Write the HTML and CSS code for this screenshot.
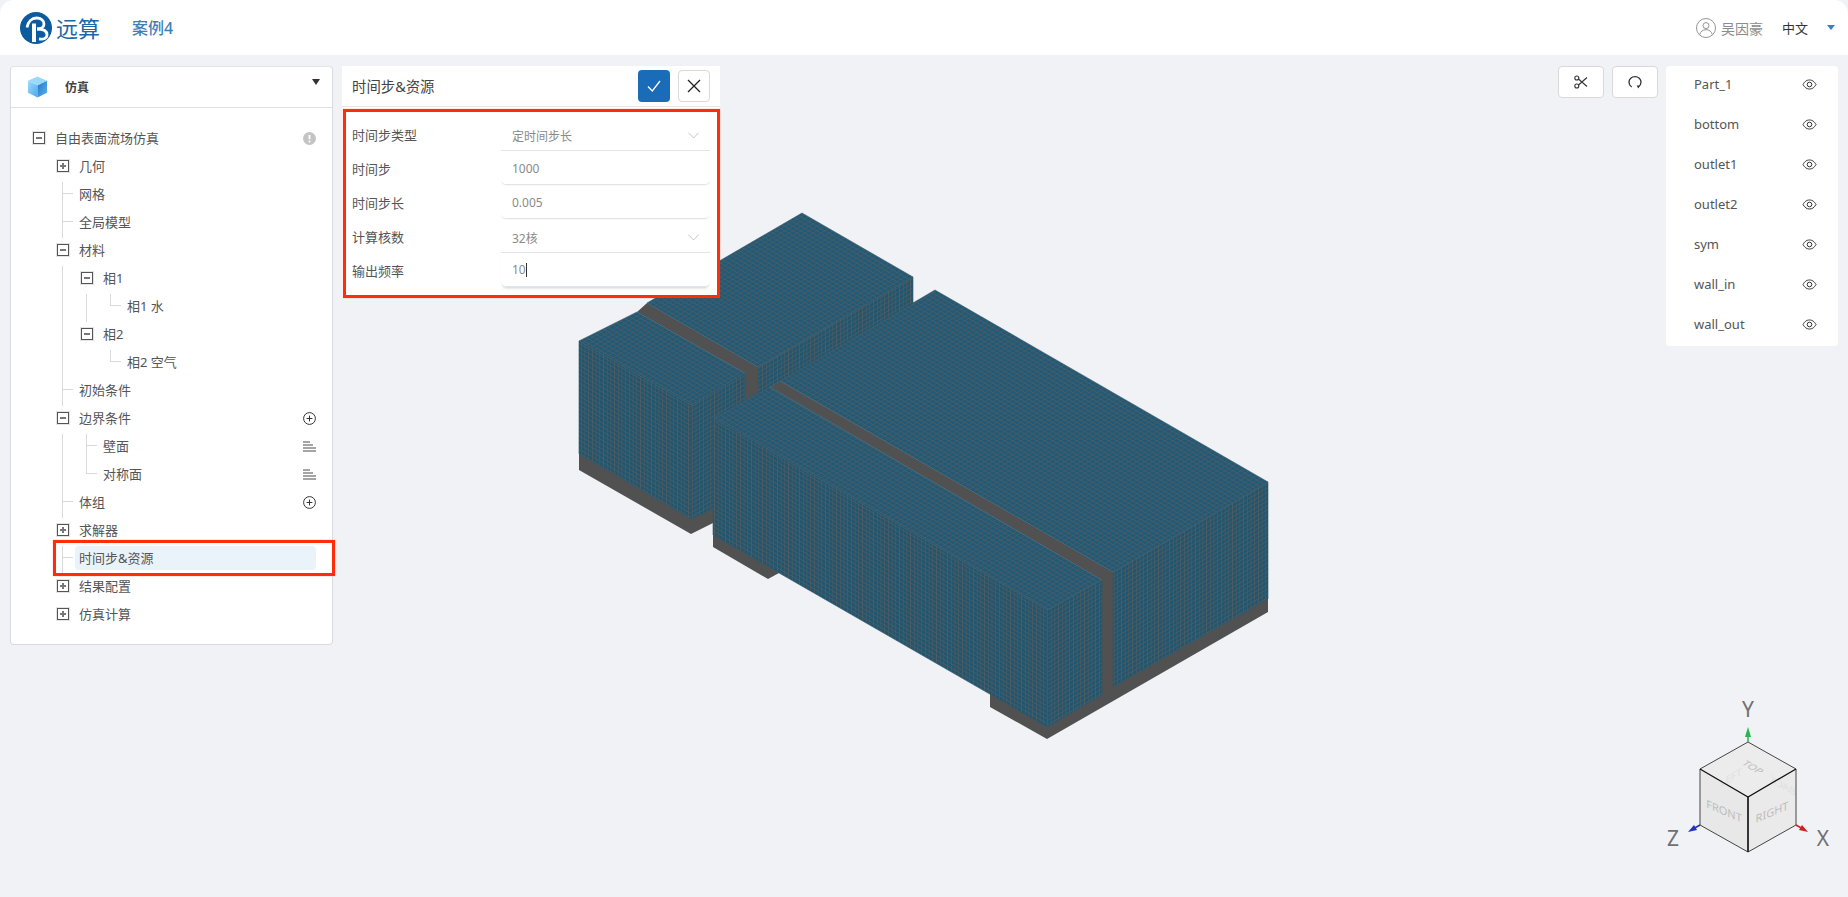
FILE: index.html
```html
<!DOCTYPE html>
<html lang="zh">
<head>
<meta charset="utf-8">
<title>远算</title>
<link rel="stylesheet" href="styles.css">
</head>
<body>
<svg class="defs" width="0" height="0" aria-hidden="true">
  <defs>
    <symbol id="i-plusc" viewBox="0 0 13 13"><circle cx="6.5" cy="6.5" r="5.9" fill="none" stroke="#333" stroke-width="1"/><path d="M6.5 3.6v5.8M3.6 6.5h5.8" stroke="#333" stroke-width="1"/></symbol>
    <symbol id="i-lines" viewBox="0 0 13 11"><path d="M0 1h7M0 4h10M0 7h13M0 10h13" stroke="#888" stroke-width="1.3"/></symbol>
    <symbol id="i-eye" viewBox="0 0 15 11"><path d="M1 5.5C3 2 5 1 7.500 1s4.500 1 6.500 4.500C12 9 10 10 7.500 10S3 9 1 5.500z" fill="none" stroke="#333" stroke-width="1"/><circle cx="7.500" cy="5.500" r="2.300" fill="none" stroke="#333" stroke-width="1"/></symbol>
    <symbol id="i-chev" viewBox="0 0 11 7"><path d="M.5 .8 5.500 6l5-5.200" fill="none" stroke="#c4c4c4" stroke-width="1"/></symbol>
    <pattern id="m-top" patternUnits="userSpaceOnUse" width="4" height="4" patternTransform="matrix(1 .577 1 -.577 0 0)"><rect width="4" height="4" fill="#215a76"/><path d="M0 0H4M0 0V4" stroke="#575c5f" stroke-width="1" fill="none"/></pattern>
    <pattern id="m-left" patternUnits="userSpaceOnUse" width="3.700" height="4.400" patternTransform="matrix(1 .577 0 1 0 0)"><rect width="3.700" height="4.400" fill="#22566f"/><path d="M0 0H3.700M0 0V4.400" stroke="#575c5f" stroke-width="1.150" fill="none"/></pattern>
    <pattern id="m-right" patternUnits="userSpaceOnUse" width="3.700" height="4.400" patternTransform="matrix(1 -.577 0 1 0 0)"><rect width="3.700" height="4.400" fill="#22566f"/><path d="M0 0H3.700M0 0V4.400" stroke="#575c5f" stroke-width="1.150" fill="none"/></pattern>
    <linearGradient id="cube-a" x1="0" y1="0" x2="1" y2="1"><stop offset="0" stop-color="#9bdafa"/><stop offset="1" stop-color="#4ea8ec"/></linearGradient>
    <linearGradient id="cube-b" x1="0" y1="0" x2="1" y2="1"><stop offset="0" stop-color="#1f75c8"/><stop offset="1" stop-color="#5fb2ee"/></linearGradient>
  </defs>
</svg>

<svg class="scene" viewBox="0 0 1848 897" aria-hidden="true">
  <g fill="#515151">
    <polygon points="579,450 579,470 691,534 713,523 713,500"/>
    <polygon points="713,530 713,547 768,579 790,567"/>
    <polygon points="990,680 990,707 1047,739 1268,612 1268,590 1047,700"/>
    <polygon points="637,312 647,303 758,367 758,400 745,405 745,373"/>
    <polygon points="770,387 780,381 1113,572 1113,690 1102,696 1102,580"/>
  </g>
  <g class="mesh">
    <polygon points="647,303 802,213 913,277 758,367" fill="url(#m-top)"/>
    <polygon points="758,367 913,277 913,304 770,387 758,394" fill="url(#m-right)"/>
    <polygon points="579,341 637,312 745,373 691,405" fill="url(#m-top)"/>
    <polygon points="579,341 691,405 691,519 579,454" fill="url(#m-left)"/>
    <polygon points="691,405 745,373 745,402 713,418 713,509 691,519" fill="url(#m-right)"/>
    <polygon points="780,381 935,290 1268,482 1113,572" fill="url(#m-top)"/>
    <polygon points="1113,572 1268,482 1268,599 1113,687" fill="url(#m-right)"/>
    <polygon points="713,418 767,388 770,387 1102,580 1047,610" fill="url(#m-top)"/>
    <polygon points="713,418 1047,610 1047,727 713,535" fill="url(#m-left)"/>
    <polygon points="1047,610 1102,580 1102,695 1047,727" fill="url(#m-right)"/>
  </g>

  <g class="gizmo">
    <polygon points="1748,742 1796,769 1748,797 1700,769" fill="#ececec"/>
    <polygon points="1700,769 1748,797 1748,852 1700,825" fill="#e8e8e8"/>
    <polygon points="1748,797 1796,769 1796,825 1748,852" fill="#eaeaea"/>
    <text class="gz-faint" transform="matrix(1 -.577 0 1 1731 781)">LEFT</text>
    <text class="gz-faint" transform="matrix(-1 -.577 0 1 1783 789)">BACK</text>
    <text class="gz-label" transform="matrix(.85 .5 -.75 .45 1750 769)">TOP</text>
    <text class="gz-label" transform="matrix(1 .42 0 1 1724 815)">FRONT</text>
    <text class="gz-label" transform="matrix(1 -.42 0 1 1772 816)">RIGHT</text>
    <path d="M1748 742 1796 769 1796 825 1748 852 1700 825 1700 769Z" fill="none" stroke="#444" stroke-width="1"/>
    <path d="M1700 769 1748 797 1796 769" fill="none" stroke="#111" stroke-width="1.300"/>
    <path d="M1748 797V852" stroke="#222" stroke-width="1.800"/>
    <path d="M1748 742V732" stroke="#25b84a" stroke-width="1.500"/>
    <polygon points="1748,727 1751,737 1745,737" fill="#25b84a"/>
    <path d="M1700 825 1693 829" stroke="#2233bb" stroke-width="1.500"/>
    <polygon points="1688,832 1694,825 1697,830" fill="#2233bb"/>
    <path d="M1796 825 1803 829" stroke="#cc2222" stroke-width="1.500"/>
    <polygon points="1808,832 1802,825 1799,830" fill="#cc2222"/>
    <text class="gz-axis" x="1748" y="717">Y</text>
    <text class="gz-axis" x="1673" y="846">Z</text>
    <text class="gz-axis" x="1823" y="846">X</text>
  </g>
</svg>

<header class="topbar">
  <div class="brand">
    <svg class="logo" viewBox="0 0 32 32" aria-hidden="true">
      <circle cx="16" cy="16" r="16" fill="#0c5aa0"/>
      <g fill="none" stroke="#fff">
        <path d="M7 15.500C8 9.500 12 6 16.500 6 21 6 24 8.800 24 12c0 3.200-3 5-7 5" stroke-width="2.800"/>
        <path d="M14 11.500V30" stroke-width="4"/>
        <path d="M17 17c5.500 0 10 1.800 10 5.800 0 3.400-3.500 5-8 4" stroke-width="2.800"/>
      </g>
    </svg>
    <span class="brand-name">远算</span>
  </div>
  <span class="case-name">案例4</span>
  <div class="top-right">
    <svg class="user-ico" viewBox="0 0 20 20" aria-hidden="true"><circle cx="10" cy="10" r="9.500" fill="none" stroke="#888" stroke-width=".9"/><circle cx="10" cy="7.600" r="3" fill="none" stroke="#888" stroke-width=".9"/><path d="M3.800 16.500c.6-3 3-4.800 6.200-4.800s5.600 1.800 6.200 4.800" fill="none" stroke="#888" stroke-width=".9"/></svg>
    <span class="user-name">吴因豪</span>
    <span class="lang">中文</span>
    <span class="lang-caret"></span>
  </div>
</header>

<main class="workspace">
  <aside class="sidebar">
    <div class="side-head">
      <svg class="side-cube" viewBox="0 0 22 22" aria-hidden="true">
        <polygon points="11,0 21,4.500 11,9.500 1,4.500" fill="#9bd9f8"/>
        <polygon points="1,4.500 11,9.500 11,22 1,17" fill="url(#cube-a)"/>
        <polygon points="11,9.500 21,4.500 21,17 11,22" fill="url(#cube-b)"/>
      </svg>
      <span class="side-title">仿真</span>
      <span class="side-caret"></span>
    </div>
    <div class="tree">
      <div class="row"><span class="sw"><i class="box minus"></i></span><span class="lbl">自由表面流场仿真</span>
        <svg class="act" viewBox="0 0 13 13" aria-hidden="true"><circle cx="6.500" cy="6.500" r="6.500" fill="#c4c4c4"/><path d="M6.500 3v4.300" stroke="#fff" stroke-width="1.800"/><circle cx="6.500" cy="9.500" r="1" fill="#fff"/></svg>
      </div>
      <div class="row"><span class="ind"></span><span class="sw"><i class="box plus"></i></span><span class="lbl">几何</span></div>
      <div class="row"><span class="ind"></span><span class="sw leaf"></span><span class="lbl">网格</span></div>
      <div class="row"><span class="ind"></span><span class="sw leaf"></span><span class="lbl">全局模型</span></div>
      <div class="row"><span class="ind"></span><span class="sw"><i class="box minus"></i></span><span class="lbl">材料</span></div>
      <div class="row"><span class="ind"></span><span class="ind vline"></span><span class="sw"><i class="box minus"></i></span><span class="lbl">相1</span></div>
      <div class="row"><span class="ind"></span><span class="ind vline"></span><span class="ind vline"></span><span class="sw last"></span><span class="lbl">相1 水</span></div>
      <div class="row"><span class="ind"></span><span class="ind vline"></span><span class="sw"><i class="box minus"></i></span><span class="lbl">相2</span></div>
      <div class="row"><span class="ind"></span><span class="ind vline"></span><span class="ind"></span><span class="sw last"></span><span class="lbl">相2 空气</span></div>
      <div class="row"><span class="ind"></span><span class="sw leaf"></span><span class="lbl">初始条件</span></div>
      <div class="row"><span class="ind"></span><span class="sw"><i class="box minus"></i></span><span class="lbl">边界条件</span><svg class="act" aria-hidden="true"><use href="#i-plusc"/></svg></div>
      <div class="row"><span class="ind"></span><span class="ind vline"></span><span class="sw leaf"></span><span class="lbl">壁面</span><svg class="act act-lines" aria-hidden="true"><use href="#i-lines"/></svg></div>
      <div class="row"><span class="ind"></span><span class="ind vline"></span><span class="sw last"></span><span class="lbl">对称面</span><svg class="act act-lines" aria-hidden="true"><use href="#i-lines"/></svg></div>
      <div class="row"><span class="ind"></span><span class="sw leaf"></span><span class="lbl">体组</span><svg class="act" aria-hidden="true"><use href="#i-plusc"/></svg></div>
      <div class="row"><span class="ind"></span><span class="sw"><i class="box plus"></i></span><span class="lbl">求解器</span></div>
      <div class="row"><span class="ind"></span><span class="sw leaf"></span><span class="lbl selected">时间步&amp;资源</span><span class="mark mark-row"></span></div>
      <div class="row"><span class="ind"></span><span class="sw"><i class="box plus"></i></span><span class="lbl">结果配置</span></div>
      <div class="row"><span class="ind"></span><span class="sw"><i class="box plus"></i></span><span class="lbl">仿真计算</span></div>
    </div>
  </aside>

  <section class="panel">
    <div class="panel-head">
      <span class="panel-title">时间步&amp;资源</span>
      <button class="btn-ok" type="button" aria-label="确定"><svg viewBox="0 0 16 16" aria-hidden="true"><path d="M2 8.500 6.300 13 14 3" fill="none" stroke="#fff" stroke-width="1.300"/></svg></button>
      <button class="btn-close" type="button" aria-label="关闭"><svg viewBox="0 0 14 14" aria-hidden="true"><path d="M1 1l12 12M13 1 1 13" fill="none" stroke="#222" stroke-width="1.300"/></svg></button>
    </div>
    <div class="form">
      <div class="f-row"><span class="f-label">时间步类型</span><div class="f-ctl select"><span>定时间步长</span><svg class="chev" aria-hidden="true"><use href="#i-chev"/></svg></div></div>
      <div class="f-row"><span class="f-label">时间步</span><div class="f-ctl input"><span>1000</span></div></div>
      <div class="f-row"><span class="f-label">时间步长</span><div class="f-ctl input"><span>0.005</span></div></div>
      <div class="f-row"><span class="f-label">计算核数</span><div class="f-ctl select"><span>32核</span><svg class="chev" aria-hidden="true"><use href="#i-chev"/></svg></div></div>
      <div class="f-row"><span class="f-label">输出频率</span><div class="f-ctl input active"><span class="caret-txt">10</span></div></div>
    </div>
    <span class="mark mark-form"></span>
  </section>

  <div class="spacer"></div>

  <div class="tools">
    <button class="tool" type="button" aria-label="剪切"><svg viewBox="0 0 14 14" aria-hidden="true"><circle cx="2.800" cy="3" r="2" fill="none" stroke="#333" stroke-width="1.100"/><circle cx="2.800" cy="11" r="2" fill="none" stroke="#333" stroke-width="1.100"/><path d="M4.500 4 13 11.500M4.500 10 13 2.500" fill="none" stroke="#333" stroke-width="1.100"/></svg></button>
    <button class="tool" type="button" aria-label="重置"><svg viewBox="0 0 14 14" aria-hidden="true"><path d="M3.700 12C1.800 10.800 1 9.200 1 7.300 1 4 3.600 1.600 7 1.600s6 2.400 6 5.700c0 1.900-.8 3.500-2.700 4.700" fill="none" stroke="#333" stroke-width="1.300"/><polygon points="8.600,10.400 12,10.400 10.300,13.400" fill="#333"/></svg></button>
  </div>

  <ul class="parts">
    <li class="part"><span>Part_1</span><svg class="eye" aria-hidden="true"><use href="#i-eye"/></svg></li>
    <li class="part"><span>bottom</span><svg class="eye" aria-hidden="true"><use href="#i-eye"/></svg></li>
    <li class="part"><span>outlet1</span><svg class="eye" aria-hidden="true"><use href="#i-eye"/></svg></li>
    <li class="part"><span>outlet2</span><svg class="eye" aria-hidden="true"><use href="#i-eye"/></svg></li>
    <li class="part"><span>sym</span><svg class="eye" aria-hidden="true"><use href="#i-eye"/></svg></li>
    <li class="part"><span>wall_in</span><svg class="eye" aria-hidden="true"><use href="#i-eye"/></svg></li>
    <li class="part"><span>wall_out</span><svg class="eye" aria-hidden="true"><use href="#i-eye"/></svg></li>
  </ul>
</main>
</body>
</html>
```
FILE: styles.css
```css
* { box-sizing: border-box; }
html, body { height: 100%; }
body {
  margin: 0;
  height: 897px;
  overflow: hidden;
  position: relative;
  background: #f0f2f6;
  color: #555;
  font-family: "Noto Sans", "Noto Sans CJK SC", sans-serif;
  font-size: 13px;
}
button { font: inherit; padding: 0; cursor: pointer; }
.defs { position: absolute; }
.scene { position: absolute; left: 0; top: 0; width: 1848px; height: 897px; }
.mesh polygon { stroke: #30586c; stroke-width: .6; }

.gz-label { font-size: 11px; fill: #bdbdbd; text-anchor: middle; font-family: "Noto Sans", sans-serif; }
.gz-faint { font-size: 10px; fill: #e0e0e0; text-anchor: middle; font-family: "Noto Sans", sans-serif; }
.gz-axis { font-size: 21px; fill: #707070; text-anchor: middle; font-family: "Noto Sans", sans-serif; }

.topbar {
  position: relative;
  height: 55px;
  display: flex;
  align-items: center;
  padding-left: 20px;
  background: #fff;
  border-radius: 14px 14px 0 0;
}
.brand { display: flex; align-items: center; }
.logo { width: 32px; height: 32px; }
.brand-name { margin-left: 4px; font-size: 22px; line-height: 30px; color: #1c66a8; }
.case-name { margin-left: 32px; margin-top: -2px; font-size: 16px; font-weight: 500; color: #3f7fb8; }
.top-right { margin-left: auto; display: flex; align-items: center; padding-right: 13px; }
.user-ico { width: 20px; height: 20px; }
.user-name { margin-left: 5px; font-size: 14px; color: #8c8c8c; }
.lang { margin-left: 19px; font-size: 13px; color: #333; margin-top: -1px; }
.lang-caret {
  margin-left: 19px;
  width: 0; height: 0;
  border-left: 4px solid transparent;
  border-right: 4px solid transparent;
  border-top: 5px solid #3a7bd5;
}

.workspace {
  position: relative;
  display: flex;
  align-items: flex-start;
  padding: 11px 10px 0 10px;
}

.sidebar {
  width: 323px;
  background: #fff;
  border: 1px solid #d8dbe0;
  border-top-color: #e2e4e8;
  border-radius: 4px;
}
.side-head {
  position: relative;
  height: 41px;
  display: flex;
  align-items: center;
  padding-left: 16px;
  border-bottom: 1px solid #dcdfe4;
}
.side-cube { width: 21px; height: 22px; }
.side-title { margin-left: 17px; font-size: 12px; font-weight: 700; color: #444; }
.side-caret {
  position: absolute; right: 12px; top: 12px;
  width: 0; height: 0;
  border-left: 4px solid transparent;
  border-right: 4px solid transparent;
  border-top: 6px solid #333;
}

.tree { padding: 16px; }
.row { position: relative; display: flex; align-items: center; height: 28px; }
.ind, .sw { position: relative; flex: none; width: 24px; height: 28px; display: flex; align-items: center; justify-content: center; }
.vline::before, .leaf::before, .last::before {
  content: ""; position: absolute; left: 11px; top: 2px; bottom: -2px; width: 1px; background: #d9d9d9;
}
.last::before { bottom: 14px; }
.leaf::after, .last::after {
  content: ""; position: absolute; left: 11px; top: 13px; width: 11px; height: 1px; background: #d9d9d9;
}
.box {
  position: relative;
  display: block;
  width: 12px; height: 12px;
  border: 1px solid #555;
  background: #fff;
  box-shadow: 0 0 0 1px #e4e4e4;
}
.box::before { content: ""; position: absolute; left: 2px; top: 4px; width: 6px; height: 2px; background: #777; }
.plus::after { content: ""; position: absolute; left: 4px; top: 2px; width: 2px; height: 6px; background: #777; }
.lbl { padding: 0 4px; height: 24px; line-height: 24px; color: #555; white-space: nowrap; }
.selected { flex: 1; background: #ebf3fa; border-radius: 4px; }
.act { margin-left: auto; flex: none; width: 13px; height: 13px; }
.act-lines { height: 11px; }

.mark {
  position: absolute;
  border: 3px solid #ff2d0a;
  box-shadow: 0 0 1px rgba(255, 45, 10, .5);
  pointer-events: none;
}
.mark-row { left: 26px; right: -19px; top: -4px; bottom: -4px; }
.mark-form { left: 1px; right: 0; top: 43px; bottom: 0; }

.panel {
  position: relative;
  margin-left: 9px;
  width: 378px;
  height: 232px;
  background: #fff;
}
.panel-head {
  height: 41px;
  display: flex;
  align-items: center;
  padding: 0 10px;
  gap: 8px;
  border-bottom: 1px solid #e8e8e8;
}
.panel-title { flex: 1; font-size: 14.4px; color: #444; margin-top: -2px; }
.btn-ok, .btn-close { width: 32px; height: 32px; display: flex; align-items: center; justify-content: center; border-radius: 4px; margin-top: -1px; }
.btn-ok { background: #1a6cb8; border: 0; }
.btn-ok svg { width: 16px; height: 16px; }
.btn-close { background: #fff; border: 1px solid #d9d9d9; }
.btn-close svg { width: 14px; height: 14px; }

.form { padding: 10px 10px 0; }
.f-row { display: flex; align-items: center; height: 34px; }
.f-label { width: 149px; flex: none; color: #555; font-size: 13px; padding-top: 1px; }
.f-ctl {
  flex: 1;
  height: 34px;
  display: flex;
  align-items: center;
  justify-content: space-between;
  padding: 4px 12px 0 11px;
  font-size: 12px;
  color: #8a8a8a;
  border-bottom: 1px solid #e4e4e4;
}
.input { border-radius: 0 0 5px 5px; box-shadow: 0 1px 1px rgba(0, 0, 0, .03); padding-top: 1px; }
.active { box-shadow: 0 3px 3px -2px rgba(90, 130, 160, .35); }
.caret-txt { border-right: 1px solid #333; line-height: 14px; }
.chev { width: 11px; height: 7px; margin-right: -1px; }

.spacer { flex: 1; }

.tools { display: flex; gap: 8px; margin-right: 8px; }
.tool {
  width: 46px; height: 32px;
  background: #fff;
  border: 1px solid #d9d9d9;
  border-radius: 4px;
  display: flex; align-items: center; justify-content: center;
}
.tool svg { width: 14px; height: 14px; }

.parts {
  margin: 0;
  padding: 0;
  list-style: none;
  width: 172px;
  height: 280px;
  background: #fff;
  border-radius: 4px;
  display: flex;
  flex-direction: column;
  gap: 4px;
}
.part {
  height: 36px;
  display: flex;
  align-items: center;
  justify-content: space-between;
  padding: 0 21px 0 28px;
  color: #555;
  font-size: 13px;
}
.eye { width: 15px; height: 11px; }
```
